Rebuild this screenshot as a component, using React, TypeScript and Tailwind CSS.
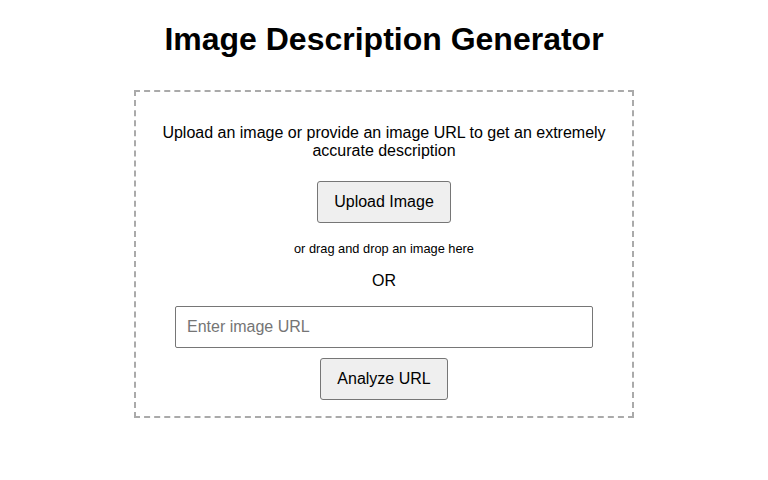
import React from "react";

export default function App() {
  return (
    <div className="min-h-screen bg-white text-black font-['Liberation_Sans',Arial,sans-serif]">
      <div className="pt-[21.44px]">
        <h1 className="text-center text-[32px] font-bold leading-[37px]">
          Image Description Generator
        </h1>
        <div className="mx-auto mt-[31.6px] w-[500px] border-2 border-dashed border-[#aaaaaa] px-5 pt-[32px] pb-[16.5px] text-center">
          <p className="text-base leading-[18px]">
            Upload an image or provide an image URL to get an extremely accurate description
          </p>
          <div className="mt-[20.5px] flex justify-center">
            <button className="rounded-[3px] border border-[#767676] bg-[#efefef] px-[16px] py-[11px] text-base leading-[18px] text-black">
              Upload Image
            </button>
          </div>
          <p className="mt-[18.8px] text-[12.8px] leading-[15px]">or drag and drop an image here</p>
          <p className="mt-[15.9px] text-base leading-[18px]">OR</p>
          <div className="mt-[15.3px] flex justify-center">
            <input
              type="text"
              placeholder="Enter image URL"
              className="w-[418px] rounded-[2px] border border-[#767676] bg-white px-[11px] py-[11px] text-base leading-[18px] text-black placeholder:text-[#757575] outline-none"
            />
          </div>
          <div className="mt-[10px] flex justify-center">
            <button className="rounded-[3px] border border-[#767676] bg-[#efefef] px-[16px] py-[11px] text-base leading-[18px] text-black">
              Analyze URL
            </button>
          </div>
        </div>
      </div>
    </div>
  );
}
